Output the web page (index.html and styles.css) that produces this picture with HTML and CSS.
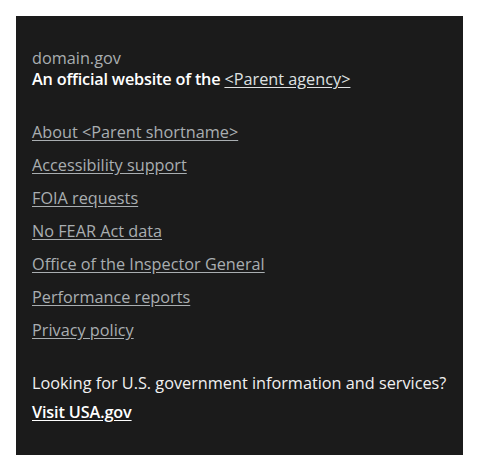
FILE: index.html
```html
<!DOCTYPE html>
<html lang="en">
<head>
<meta charset="utf-8">
<title>Identifier</title>
<link rel="stylesheet" href="styles.css">
</head>
<body>
<section class="identifier">
  <div class="masthead">
    <p class="domain">domain.gov</p>
    <p class="disclaimer">An official website of the <a href="#">&lt;Parent agency&gt;</a></p>
  </div>
  <nav class="links">
    <ul>
      <li><a href="#">About &lt;Parent shortname&gt;</a></li>
      <li><a href="#">Accessibility support</a></li>
      <li><a href="#">FOIA requests</a></li>
      <li><a href="#">No FEAR Act data</a></li>
      <li><a href="#">Office of the Inspector General</a></li>
      <li><a href="#">Performance reports</a></li>
      <li><a href="#">Privacy policy</a></li>
    </ul>
  </nav>
  <div class="usagov">
    <p class="usagov-text">Looking for U.S. government information and services?</p>
    <a class="usagov-link" href="#">Visit USA.gov</a>
  </div>
</section>
</body>
</html>
```
FILE: styles.css
```css
html, body {
  margin: 0;
  padding: 0;
  background: #ffffff;
}
body {
  padding: 16px;
  font-family: "Open Sans", "Liberation Sans", sans-serif;
  font-size: 16.25px;
  line-height: 21px;
}
.identifier {
  background: #1b1b1b;
  padding: 32px 16px;
}
p { margin: 0; }
.domain {
  color: #a9aeb1;
}
.disclaimer {
  color: #ffffff;
  font-weight: 600;
  letter-spacing: -0.2px;
}
.disclaimer a {
  color: #dfe1e2;
  font-weight: 400;
  letter-spacing: 0;
  text-decoration: underline;
  text-underline-offset: 2px;
}
.links ul {
  list-style: none;
  margin: 32px 0 0;
  padding: 0;
  display: flex;
  flex-direction: column;
  gap: 12px;
}
.links a {
  color: #a9aeb1;
  text-decoration: underline;
  text-underline-offset: 2px;
}
.usagov {
  margin-top: 32px;
  display: flex;
  flex-direction: column;
  gap: 8px;
  color: #f0f0f0;
}
.usagov-link {
  color: #ffffff;
  font-weight: 600;
  letter-spacing: -0.15px;
  text-decoration: underline;
  text-underline-offset: 2px;
  align-self: flex-start;
}
```
